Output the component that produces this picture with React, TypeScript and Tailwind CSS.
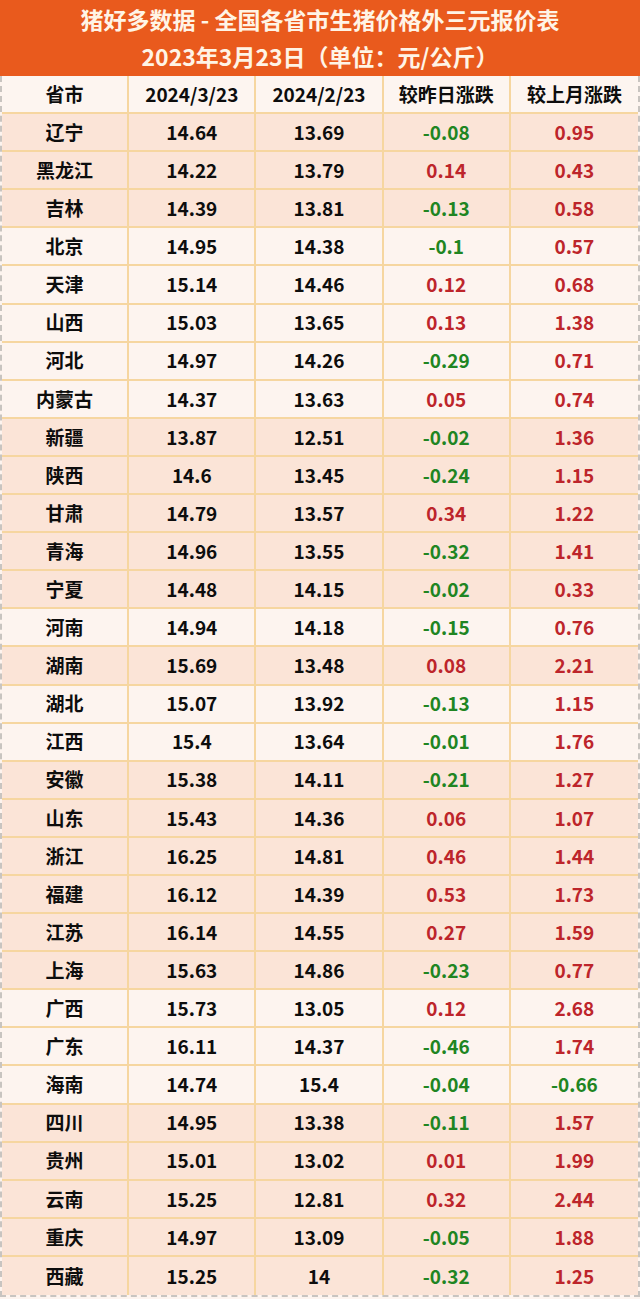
const rows: [string, string, string, string, string, boolean][] = [
  ['辽宁', '14.64', '13.69', '-0.08', '0.95', true],
  ['黑龙江', '14.22', '13.79', '0.14', '0.43', true],
  ['吉林', '14.39', '13.81', '-0.13', '0.58', true],
  ['北京', '14.95', '14.38', '-0.1', '0.57', false],
  ['天津', '15.14', '14.46', '0.12', '0.68', false],
  ['山西', '15.03', '13.65', '0.13', '1.38', false],
  ['河北', '14.97', '14.26', '-0.29', '0.71', false],
  ['内蒙古', '14.37', '13.63', '0.05', '0.74', false],
  ['新疆', '13.87', '12.51', '-0.02', '1.36', true],
  ['陕西', '14.6', '13.45', '-0.24', '1.15', true],
  ['甘肃', '14.79', '13.57', '0.34', '1.22', true],
  ['青海', '14.96', '13.55', '-0.32', '1.41', true],
  ['宁夏', '14.48', '14.15', '-0.02', '0.33', true],
  ['河南', '14.94', '14.18', '-0.15', '0.76', false],
  ['湖南', '15.69', '13.48', '0.08', '2.21', true],
  ['湖北', '15.07', '13.92', '-0.13', '1.15', false],
  ['江西', '15.4', '13.64', '-0.01', '1.76', false],
  ['安徽', '15.38', '14.11', '-0.21', '1.27', true],
  ['山东', '15.43', '14.36', '0.06', '1.07', true],
  ['浙江', '16.25', '14.81', '0.46', '1.44', true],
  ['福建', '16.12', '14.39', '0.53', '1.73', true],
  ['江苏', '16.14', '14.55', '0.27', '1.59', true],
  ['上海', '15.63', '14.86', '-0.23', '0.77', true],
  ['广西', '15.73', '13.05', '0.12', '2.68', false],
  ['广东', '16.11', '14.37', '-0.46', '1.74', false],
  ['海南', '14.74', '15.4', '-0.04', '-0.66', false],
  ['四川', '14.95', '13.38', '-0.11', '1.57', true],
  ['贵州', '15.01', '13.02', '0.01', '1.99', true],
  ['云南', '15.25', '12.81', '0.32', '2.44', true],
  ['重庆', '14.97', '13.09', '-0.05', '1.88', true],
  ['西藏', '15.25', '14', '-0.32', '1.25', true],
];

const font = { fontFamily: '"Noto Sans CJK SC", "Microsoft YaHei", sans-serif' };

function Cell({ children, tone, last }: { children: React.ReactNode; tone?: 'up' | 'down'; last?: boolean }) {
  const color = tone === 'down' ? 'text-[#208522]' : tone === 'up' ? 'text-[#bd252b]' : 'text-[#0d0d0d]';
  return (
    <div className={`flex items-center justify-center font-bold text-[19px] ${color} ${last ? '' : 'border-r-2 border-[#f6d6a0]'}`}>
      {children}
    </div>
  );
}

function tone(v: string): 'up' | 'down' {
  return v.startsWith('-') ? 'down' : 'up';
}

export default function App() {
  return (
    <div className="w-[640px] h-[1299px] overflow-hidden bg-[#fdf4ef]" style={font}>
      <div className="h-[76px] bg-[#e95a1d] flex flex-col items-center justify-center text-[#fff4e6] font-bold text-[23px] leading-[37px]">
        <div>猪好多数据 - 全国各省市生猪价格外三元报价表</div>
        <div>2023年3月23日（单位：元/公斤）</div>
      </div>
      <div className="border-x-2 border-b-2 border-dashed border-[#c8c4c0]">
        <div className="grid grid-cols-5 h-[38.1px] bg-[#fdf5f0] border-b-2 border-[#f6d6a0]">
          <Cell>省市</Cell>
          <Cell>2024/3/23</Cell>
          <Cell>2024/2/23</Cell>
          <Cell>较昨日涨跌</Cell>
          <Cell last>较上月涨跌</Cell>
        </div>
        {rows.map(([name, a, b, d, m, peach], i) => (
          <div
            key={name}
            className={`grid grid-cols-5 h-[38.1px] ${peach ? 'bg-[#fbe4d7]' : 'bg-[#fdf4ef]'} ${i === rows.length - 1 ? '' : 'border-b-2 border-[#f6d6a0]'}`}
          >
            <Cell>{name}</Cell>
            <Cell>{a}</Cell>
            <Cell>{b}</Cell>
            <Cell tone={tone(d)}>{d}</Cell>
            <Cell tone={tone(m)} last>{m}</Cell>
          </div>
        ))}
      </div>
    </div>
  );
}
